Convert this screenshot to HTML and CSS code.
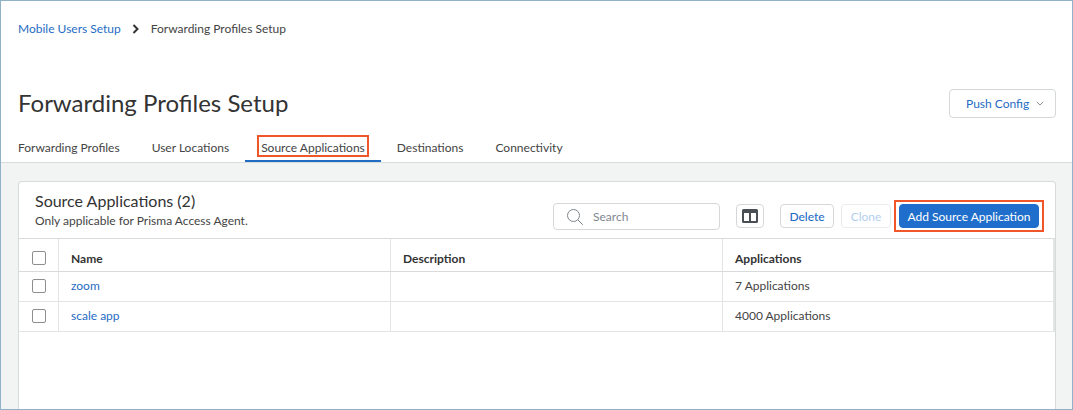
FILE: index.html
```html
<!DOCTYPE html>
<html lang="en">
<head>
<meta charset="utf-8">
<title>Forwarding Profiles Setup</title>
<link rel="stylesheet" href="styles.css">
</head>
<body>
<div class="frame">
  <header class="top">
    <nav class="crumbs">
      <a class="crumb-link">Mobile Users Setup</a>
      <svg class="crumb-sep" width="8" height="10" viewBox="0 0 8 10"><path d="M1.5 1l4 4-4 4" fill="none" stroke="#333" stroke-width="2"/></svg>
      <span class="crumb-current">Forwarding Profiles Setup</span>
    </nav>
    <div class="title-row">
      <h1 class="title">Forwarding Profiles Setup</h1>
      <button class="push">Push Config
        <svg width="8" height="5" viewBox="0 0 8 5"><path d="M.7.8L4 4l3.3-3.2" fill="none" stroke="#8a9299" stroke-width="1"/></svg>
      </button>
    </div>
    <div class="tabs">
      <div class="tab">Forwarding Profiles</div>
      <div class="tab">User Locations</div>
      <div class="tab active"><span class="mark">Source Applications</span></div>
      <div class="tab">Destinations</div>
      <div class="tab">Connectivity</div>
    </div>
  </header>
  <main class="content">
    <section class="card">
      <div class="card-head">
        <div class="heading">
          <h2 class="card-title">Source Applications (2)</h2>
          <p class="card-sub">Only applicable for Prisma Access Agent.</p>
        </div>
        <div class="tools">
          <div class="search">
            <svg width="18" height="18" viewBox="0 0 18 18"><circle cx="7.5" cy="7.5" r="6" fill="none" stroke="#7d858c" stroke-width="1"/><path d="M11.8 11.8l5 5" stroke="#7d858c" stroke-width="1"/></svg>
            <span>Search</span>
          </div>
          <button class="icon-btn">
            <svg width="16" height="14" viewBox="0 0 16 14"><path fill-rule="evenodd" d="M1.5 0h13A1.5 1.5 0 0 1 16 1.500v11a1.500 1.500 0 0 1-1.500 1.500h-13A1.500 1.500 0 0 1 0 12.500v-11A1.500 1.500 0 0 1 1.500 0zM2 4v8h5V4zm7 0v8h5V4z" fill="#4a4f55"/></svg>
          </button>
          <button class="btn delete">Delete</button>
          <button class="btn clone">Clone</button>
          <div class="add-mark"><button class="btn add">Add Source Application</button></div>
        </div>
      </div>
      <div class="table">
        <div class="row head">
          <div class="cell check"><span class="box"></span></div>
          <div class="cell">Name</div>
          <div class="cell">Description</div>
          <div class="cell">Applications</div>
        </div>
        <div class="row">
          <div class="cell check"><span class="box"></span></div>
          <div class="cell link">zoom</div>
          <div class="cell"></div>
          <div class="cell">7 Applications</div>
        </div>
        <div class="row">
          <div class="cell check"><span class="box"></span></div>
          <div class="cell link">scale app</div>
          <div class="cell"></div>
          <div class="cell">4000 Applications</div>
        </div>
      </div>
    </section>
  </main>
</div>
</body>
</html>
```

FILE: styles.css
```css
* { box-sizing: border-box; }
html, body { margin: 0; padding: 0; }
body {
  width: 1073px;
  height: 410px;
  overflow: hidden;
  font-family: "Lato", sans-serif;
  color: #333;
  background: #fff;
}
button { font-family: inherit; cursor: pointer; }
.frame {
  width: 1073px;
  height: 410px;
  display: flex;
  flex-direction: column;
  border: 1px solid #8fb2c8;
}
.top { background: #fff; border-bottom: 1px solid #d8dbdb; height: 162px; flex: none; }
.crumbs {
  display: flex;
  align-items: center;
  padding: 18px 0 0 17px;
  height: 38px;
  font-size: 12px;
  line-height: 18px;
}
.crumb-link { color: #1f6cc4; }
.crumb-sep { margin: 0 11px 0 11px; }
.crumb-current { color: #444; }
.title-row {
  display: flex;
  justify-content: space-between;
  align-items: center;
  padding: 49px 16px 0 17px;
}
.title { margin: 0; font-size: 24px; font-weight: 400; line-height: 30px; color: #333; }
.push {
  width: 107px;
  height: 29px;
  background: #fff;
  border: 1px solid #d5d8da;
  border-radius: 4px;
  color: #1f6cc4;
  font-size: 12px;
  display: flex;
  align-items: center;
  gap: 7px;
  padding: 0 0 0 16px;
}
.tabs { display: flex; padding: 15px 0 0 1px; }
.tab {
  padding: 0 16px;
  height: 29px;
  font-size: 12px;
  line-height: 29px;
  color: #444;
}
.tab.active { border-bottom: 2px solid #1f6cc4; }
.mark {
  display: inline-block;
  height: 18px;
  line-height: 22px;
  padding: 0 2px;
  margin: 0 -2px;
  outline: 2px solid #f0562a;
}
.content { flex: 1; background: #f2f4f3; padding: 18px 16px 0 17px; min-height: 0; }
.card {
  height: 100%;
  background: #fff;
  border: 1px solid #d8dbdb;
  border-bottom: 0;
  border-radius: 4px 4px 0 0;
}
.card-head {
  height: 56px;
  display: flex;
  justify-content: space-between;
  padding: 8px 16px 0 16px;
}
.card-title { margin: 0; font-size: 16px; font-weight: 400; line-height: 22px; color: #333; }
.card-sub { margin: 1px 0 0; font-size: 12px; line-height: 16px; color: #444; }
.tools { display: flex; align-items: flex-start; padding-top: 13px; }
.search {
  width: 167px;
  height: 27px;
  border: 1px solid #d5d8da;
  border-radius: 4px;
  display: flex;
  align-items: center;
  padding-left: 12px;
  gap: 9px;
  font-size: 12px;
  color: #7f8790;
  margin-right: 16px;
}
.icon-btn {
  width: 28px;
  height: 24px;
  margin: 1px 16px 0 0;
  background: #fff;
  border: 1px solid #d5d8da;
  border-radius: 4px;
  padding: 0;
  display: flex;
  align-items: center;
  justify-content: center;
}
.btn {
  height: 24px;
  border-radius: 4px;
  margin-top: 1px;
  font-size: 12px;
  padding: 0;
  background: #fff;
  border: 1px solid #d5d8da;
}
.delete { width: 54px; color: #1f6cc4; font-weight: 500; }
.clone { width: 50px; margin-left: 7px; color: #b4cfee; border-color: #e8ecee; }
.add-mark {
  display: flex;
  padding: 2px 3px;
  margin: -1px -3px 0 5px;
  outline: 2px solid #f0562a;
}
.add {
  width: 140px;
  margin-top: 0;
  background: #206ecb;
  border-color: #206ecb;
  color: #fff;
}
.table { border-top: 1px solid #d8dbdb; }
.row {
  display: grid;
  grid-template-columns: 40px 332px 332px 1fr;
  height: 30px;
  border-bottom: 1px solid #e3e5e5;
  font-size: 12px;
  color: #444;
  border-right: 2px solid #e3e5e5;
}
.cell {
  display: flex;
  align-items: center;
  padding: 0 0 2px 12px;
  border-right: 1px solid #e3e5e5;
}
.row.head { height: 33px; font-weight: 700; color: #333; border-bottom-color: #d8dbdb; }
.row.head .cell { padding-top: 6px; padding-bottom: 0; }
.cell:last-child { border-right: 0; }
.cell.check { padding-left: 13px; }
.link { color: #1f6cc4; }
.box {
  width: 14px;
  height: 14px;
  border: 1px solid #8e8e8e;
  border-radius: 2px;
  background: #fff;
}
```
